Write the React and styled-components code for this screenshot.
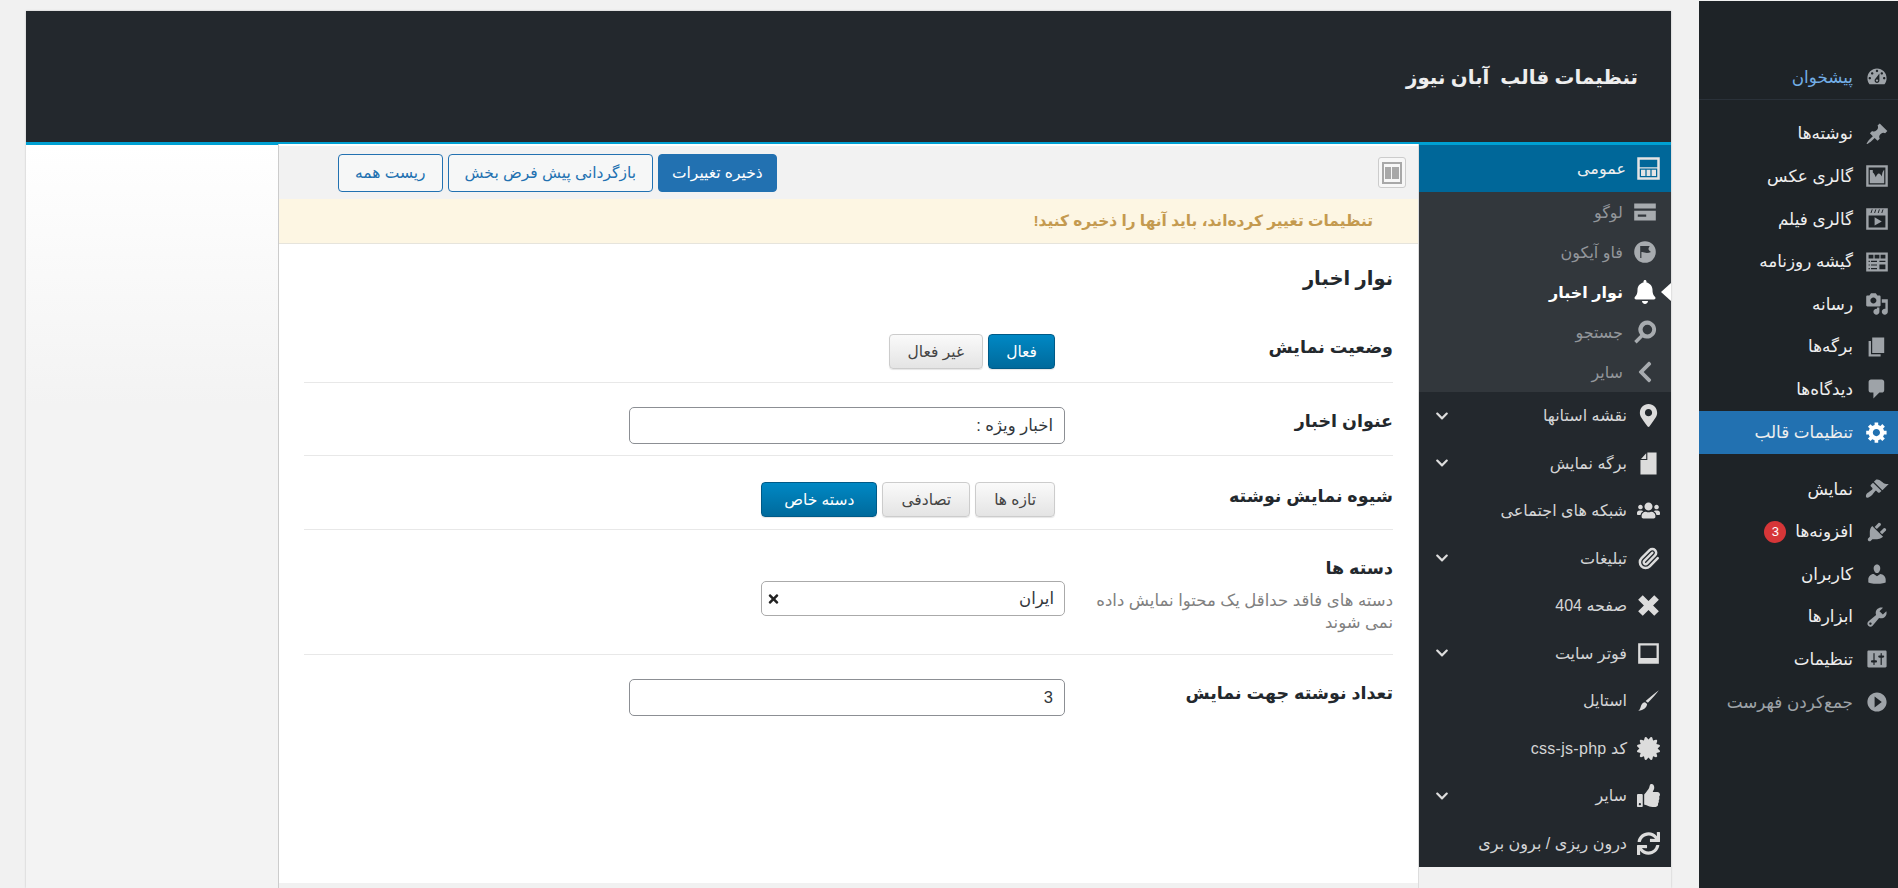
import styled, { createGlobalStyle } from "styled-components";
import { Paperclip } from "lucide-react";
import {
  FaBell,
  FaCertificate,
  FaChevronDown,
  FaChevronLeft,
  FaMapMarkerAlt,
  FaSync,
  FaThumbsUp,
  FaTimes,
  FaUsers,
} from "react-icons/fa";

const FONT = `"Liberation Sans", "DejaVu Sans", sans-serif`;

const GlobalStyle = createGlobalStyle`
  html, body {
    margin: 0;
    height: 100%;
    overflow: hidden;
    background: #f1f1f1;
  }
  * {
    box-sizing: border-box;
  }
`;

const Page = styled.div`
  direction: rtl;
  display: flex;
  gap: 28px;
  height: 888px;
  font-family: ${FONT};
`;

const AdminMenu = styled.nav`
  width: 199px;
  flex: none;
  margin-top: 1px;
  padding-top: 55px;
  background: #1e2327;
  display: flex;
  flex-direction: column;
`;

const AdminItem = styled.div`
  height: ${(p) => (p.$tall ? "43px" : "42.6px")};
  flex: none;
  display: flex;
  align-items: center;
  gap: 12px;
  padding-right: 9px;
  font-size: 16.8px;
  white-space: nowrap;
  color: ${(p) => p.$color || "#eeeeee"};
  background: ${(p) => (p.$active ? "#2271b1" : "transparent")};
  margin-bottom: ${(p) => (p.$gapAfter ? "14px" : "0")};

  svg {
    width: 24px;
    height: 24px;
    flex: none;
    color: ${(p) => (p.$active ? "#ffffff" : "#9ea3a8")};
  }
`;

const AdminDivider = styled.div`
  height: 1px;
  background: #2a3139;
  margin-bottom: 13px;
`;

const Badge = styled.span`
  width: 22px;
  height: 22px;
  border-radius: 50%;
  margin-right: -3px;
  background: #d63638;
  color: #fff;
  font-size: 13px;
  display: flex;
  align-items: center;
  justify-content: center;
`;

const Panel = styled.div`
  width: 1645px;
  flex: none;
  margin-top: 11px;
  display: flex;
  flex-direction: column;
  box-shadow: 0 0 2px rgba(0, 0, 0, 0.2);
`;

const PanelHeader = styled.header`
  height: 134px;
  flex: none;
  background: #23282d;
  border-bottom: 3px solid #00a0d2;
  padding: 51px 33px 0 0;
  color: #eeeeee;
  font-size: 19.8px;
  font-weight: 700;
  line-height: 30px;
  white-space: pre;
`;

const PanelBody = styled.div`
  flex: 1;
  display: flex;
  background: #f1f1f1;
`;

const SettingsNav = styled.div`
  width: 252px;
  flex: none;
  align-self: flex-start;
  background: #23282d;
  display: flex;
  flex-direction: column;
`;

const NavHead = styled.div`
  height: 47px;
  display: flex;
  align-items: center;
  gap: 10px;
  padding-right: 10px;
  background: #006799;
  color: #eeeeee;
  font-size: 16px;
  letter-spacing: 0.3px;

  svg {
    width: 25px;
    height: 25px;
    color: #e4e4e4;
  }
`;

const SubList = styled.div`
  background: #32373c;
  display: flex;
  flex-direction: column;
`;

const SubItem = styled.div`
  position: relative;
  height: 40px;
  display: flex;
  align-items: center;
  gap: 10px;
  padding-right: 14px;
  font-size: 16px;
  letter-spacing: 0.3px;
  font-weight: ${(p) => (p.$active ? 700 : 400)};
  color: ${(p) => (p.$active ? "#ffffff" : "#92969b")};

  svg {
    width: 24px;
    height: 24px;
    flex: none;
    color: ${(p) => (p.$active ? "#ffffff" : "#a7abaf")};
  }

  ${(p) =>
    p.$active &&
    `
    &::after {
      content: "";
      position: absolute;
      right: 0;
      top: 11px;
      border-style: solid;
      border-width: 9px 10px 9px 0;
      border-color: transparent #ffffff transparent transparent;
    }
  `}
`;

const NavItem = styled.div`
  height: 47.5px;
  display: flex;
  align-items: center;
  gap: 10px;
  padding: 0 11px 0 15px;
  color: #d4d5d6;
  font-size: 16px;
  letter-spacing: 0.3px;

  > svg:first-child {
    width: 23px;
    height: 23px;
    flex: none;
    color: #dcdcdc;
  }
`;

const Arrow = styled(FaChevronDown)`
  width: 16px;
  height: 14px;
  margin-right: auto;
  color: #dddddd;
`;

const MainColumn = styled.div`
  width: 1141px;
  flex: none;
  margin-top: -1px;
  border-left: 1px solid #cccccc;
  border-right: 1px solid #dddddd;
`;

const Main = styled.main`
  height: 739px;
  border-top: 2px solid #ffffff;
  background: #ffffff;
`;

const Toolbar = styled.div`
  height: 53px;
  background: #f2f2f2;
  display: flex;
  justify-content: space-between;
  align-items: flex-start;
  padding: 8px 12px 0 59px;
`;

const LayoutToggle = styled.div`
  width: 28px;
  height: 31px;
  margin-top: 3px;
  border: 1px solid #cccccc;
  border-radius: 3px;
  background: #f7f7f7;
  display: flex;
  align-items: center;
  justify-content: center;

  svg {
    width: 20px;
    height: 22px;
  }
`;

const ActionGroup = styled.div`
  display: flex;
  gap: 5px;
`;

const ActionButton = styled.button`
  height: 38px;
  padding: 0 ${(p) => (p.$primary ? 13 : 16)}px;
  border: 1px solid #2271b1;
  border-radius: 4px;
  background: ${(p) => (p.$primary ? "#2271b1" : "#f6f7f7")};
  color: ${(p) => (p.$primary ? "#ffffff" : "#2271b1")};
  font-family: ${FONT};
  font-size: 15.5px;
  white-space: nowrap;
`;

const Notice = styled.div`
  height: 45px;
  padding: 0 45px 0 0;
  display: flex;
  align-items: center;
  background: #fdf6e3;
  border-bottom: 1px solid #e6e4dc;
  color: #c49a4f;
  font-size: 15.4px;
  font-weight: 700;
`;

const Section = styled.section`
  padding: 0 25px;
`;

const SectionTitle = styled.h2`
  margin: 0;
  height: 65px;
  padding-top: 22px;
  font-size: 19.5px;
  line-height: 24px;
  font-weight: 700;
  color: #23282d;
`;

const Row = styled.div`
  display: flex;
  align-items: flex-start;
  padding: 26px 0 ${(p) => p.$bottom || 12}px;
  border-bottom: ${(p) => (p.$last ? "none" : "1px solid #e8e8e8")};
`;

const LabelCol = styled.div`
  width: 328px;
  flex: none;
  padding-left: 22px;
  margin-top: ${(p) => p.$top || 0}px;
`;

const Label = styled.div`
  font-size: 17.5px;
  font-weight: 700;
  line-height: 24px;
  color: #23282d;
`;

const Hint = styled.div`
  margin-top: 9px;
  font-size: 16.5px;
  line-height: 22px;
  color: #808080;
`;

const Control = styled.div`
  margin-top: ${(p) => p.$top || 0}px;
`;

const TextInput = styled.div`
  width: 436px;
  height: 37px;
  padding: 0 11px;
  display: flex;
  align-items: center;
  border: 1px solid #8c8f94;
  border-radius: 5px;
  background: #fff;
  color: #32373c;
  font-size: 16.5px;
`;

const SelectBox = styled(TextInput)`
  width: 304px;
  height: 35px;
  border-color: #aaaaaa;
  justify-content: space-between;
  padding: 0 10px 0 5px;

  svg {
    width: 13px;
    height: 14px;
    color: #222222;
  }
`;

const ToggleGroup = styled.div`
  display: flex;
  gap: 5px;
  padding-right: 10px;
`;

const ToggleButton = styled.div`
  height: 35px;
  padding: 0 ${(p) => p.$pad || 18}px;
  display: flex;
  align-items: center;
  border: 1px solid ${(p) => (p.$on ? "#005a87" : "#cccccc")};
  border-radius: 4px;
  background: ${(p) =>
    p.$on
      ? "linear-gradient(#0088c4, #006a9c)"
      : "linear-gradient(#fafafa, #e4e4e4)"};
  box-shadow: 0 1px 1px rgba(0, 0, 0, 0.1);
  color: ${(p) => (p.$on ? "#ffffff" : "#444444")};
  font-size: 15.5px;
  white-space: nowrap;
`;

const Aside = styled.aside`
  flex: 1;
  background: linear-gradient(#ffffff, #f3f3f3 35%);
`;

const Dash = ({ d }) => (
  <svg viewBox="0 0 20 20" fill="currentColor">
    <path d={d} fillRule="evenodd" />
  </svg>
);

const FilmIcon = () => (
  <svg viewBox="0 0 20 20" fill="currentColor">
    <path d="M1 1h18v18H1zM3 7v10h14V7zM8 8.500l6 3.500-6 3.500z" fillRule="evenodd" />
    <path d="M5 5l1-3M8 5l1-3M11 5l1-3M14 5l1-3" stroke="#1e2327" strokeWidth=".8" />
  </svg>
);

const NewsIcon = () => (
  <svg viewBox="0 0 20 20" fill="currentColor">
    <path
      d="M1 2h18v16H1zM3 4v3h4V4zM8 4v3h4V4zM13 4v3h4V4zM3 9v1h1V9zM5 9v1h5V9zM3 12v1h1v-1zM5 12v1h5v-1zM3 15v1h1v-1zM5 15v1h5v-1zM12 9v1h5V9zM12 12v4h5v-4z"
      fillRule="evenodd"
    />
  </svg>
);

const adminItems = [
  { text: "نوشته‌ها", d: "M10.440 3.020l1.820-1.820 6.360 6.350-1.830 1.820c-1.050-.68-2.480-.57-3.410.36l-.75.75c-.92.93-1.040 2.350-.35 3.410l-1.830 1.820-2.410-2.410-2.800 2.790c-.42.42-3.380 2.710-3.800 2.290s1.860-3.390 2.280-3.810l2.790-2.790L4.100 9.360l1.830-1.820c1.050.69 2.480.57 3.400-.36l.75-.75c.93-.92 1.050-2.350.36-3.410z" },
  { text: "گالری عکس", d: "M1 1h18v18H1zM3 3v14h14V3zM4 5h2.500v2c1 .5 2 2.500 2.500 4 .6-1.500 1.500-3 2.500-3 1 0 2 1.500 2.500 2.500.2-2 .8-5 2-5.500V16H4z" },
  { text: "گالری فیلم", icon: <FilmIcon /> },
  { text: "گیشه روزنامه", icon: <NewsIcon /> },
  { text: "رسانه", d: "M13 11V4c0-.55-.45-1-1-1h-1.670L9 1H5L3.670 3H2c-.55 0-1 .45-1 1v7c0 .55.45 1 1 1h10c.55 0 1-.45 1-1zM7 4.500c1.380 0 2.500 1.120 2.500 2.500S8.380 9.500 7 9.500 4.500 8.380 4.500 7 5.620 4.500 7 4.500zM14 6h5v10.500c0 1.380-1.120 2.500-2.500 2.500S14 17.880 14 16.500s1.120-2.500 2.500-2.500c.17 0 .34.02.5.05V9h-3V6zm-4 8.050V13h2v3.500c0 1.380-1.120 2.500-2.500 2.500S7 17.880 7 16.500 8.120 14 9.500 14c.17 0 .34.02.5.05z" },
  { text: "برگه‌ها", d: "M6 15V2h10v13H6zm-1 1h8v2H3V5h2v11z" },
  { text: "دیدگاه‌ها", d: "M5 2h9c1.100 0 2 .9 2 2v7c0 1.100-.9 2-2 2h-2l-5 5v-5H5c-1.100 0-2-.9-2-2V4c0-1.100.9-2 2-2z" },
];

const adminTools = [
  { text: "نمایش", d: "M14.480 11.060L7.410 3.990l1.500-1.500c.5-.56 2.300-.47 3.510.32 1.210.8 1.430 1.280 2.910 2.100 1.180.64 2.450 1.260 4.450.85zm-.71.71L6.700 4.700 4.930 6.470c-.39.39-.39 1.020 0 1.410l1.060 1.060c.39.39.39 1.030 0 1.420-.6.6-1.430 1.110-2.210 1.690-.35.26-.7.53-1.010.84C1.430 13.230.18 15.520 1.090 16.900c.83 1.270 3.370-.5 4.760-1.890.31-.31.58-.66.84-1.010.58-.78 1.090-1.610 1.690-2.210.39-.39 1.020-.39 1.410 0l1.060 1.060c.39.39 1.020.39 1.410 0z" },
  { text: "افزونه‌ها", badge: 3, d: "M13.110 4.360L9.870 7.600 8 5.730l3.240-3.240c.35-.34 1.050-.2 1.560.32.52.51.66 1.210.31 1.550zm-8 1.770l.91-1.120 9.010 9.010-1.190.84c-.71.71-2.630 1.160-3.820 1.160H6.140L4.900 17.260c-.59.59-1.540.59-2.120 0-.59-.58-.59-1.530 0-2.120l1.240-1.240v-3.880c0-1.130.4-3.190 1.090-3.890zm7.260 3.970l3.240-3.240c.34-.35 1.040-.21 1.550.31.52.51.66 1.210.31 1.550l-3.240 3.250z" },
  { text: "کاربران", d: "M10 9.250c-2.270 0-2.730-3.440-2.730-3.440C7 4.020 7.820 2 9.970 2c2.160 0 2.980 2.020 2.710 3.810 0 0-.41 3.440-2.680 3.440zm0 2.570L12.720 10c2.390 0 4.520 2.330 4.520 4.530v2.490s-3.650 1.130-7.240 1.130c-3.650 0-7.240-1.130-7.240-1.130v-2.490c0-2.250 1.940-4.480 4.470-4.480z" },
  { text: "ابزارها", d: "M16.680 9.770c-1.340 1.340-3.300 1.670-4.950.99l-5.410 6.520c-.99.99-2.590.99-3.580 0s-.99-2.590 0-3.570l6.520-5.420c-.68-1.650-.35-3.610.99-4.950 1.280-1.280 3.120-1.620 4.720-1.060l-2.890 2.890 2.820 2.820 2.860-2.870c.53 1.580.18 3.390-1.080 4.650zM3.810 16.210c.4.39 1.040.39 1.430 0 .4-.4.4-1.040 0-1.430-.39-.4-1.030-.4-1.430 0-.39.39-.39 1.030 0 1.430z" },
  { text: "تنظیمات", d: "M18 16V4c0-.55-.45-1-1-1H3c-.55 0-1 .45-1 1v12c0 .55.45 1 1 1h14c.55 0 1-.45 1-1zM8 11h1c.55 0 1 .45 1 1s-.45 1-1 1H8v1.500c0 .28-.22.5-.5.5s-.5-.22-.5-.5V13H6c-.55 0-1-.45-1-1s.45-1 1-1h1V5.500c0-.28.22-.5.5-.5s.5.22.5.5V11zm5-2h-1c-.55 0-1-.45-1-1s.45-1 1-1h1V5.500c0-.28.22-.5.5-.5s.5.22.5.5V7h1c.55 0 1 .45 1 1s-.45 1-1 1h-1v5.500c0 .28-.22.5-.5.5s-.5-.22-.5-.5V9z" },
];

const GEAR = "M18 12h-2.180c-.17.7-.44 1.350-.81 1.930l1.540 1.540-2.100 2.100-1.540-1.540c-.58.36-1.230.63-1.910.79V19H8v-2.180c-.68-.16-1.330-.43-1.910-.79l-1.540 1.540-2.120-2.120 1.540-1.540c-.36-.58-.63-1.230-.79-1.910H1V9.030h2.170c.16-.7.44-1.350.8-1.940L2.430 5.550l2.100-2.100 1.540 1.540c.58-.37 1.240-.64 1.930-.81V2h3v2.180c.68.16 1.330.43 1.910.79l1.540-1.540 2.120 2.120-1.540 1.540c.36.59.64 1.240.8 1.940H18V12zm-8.500 1.500c1.660 0 3-1.340 3-3s-1.340-3-3-3-3 1.340-3 3 1.340 3 3 3z";
const GAUGE = "M3.760 16h12.480c1.100-1.370 1.760-3.110 1.760-5 0-4.420-3.580-8-8-8s-8 3.580-8 8c0 1.890.66 3.630 1.760 5zM10 4c.55 0 1 .45 1 1s-.45 1-1 1-1-.45-1-1 .45-1 1-1zM6 6c.55 0 1 .45 1 1s-.45 1-1 1-1-.45-1-1 .45-1 1-1zm8 0c.55 0 1 .45 1 1s-.45 1-1 1-1-.45-1-1 .45-1 1-1zm-5.370 5.550L12 7v6c0 1.100-.9 2-2 2s-2-.9-2-2c0-.57.24-1.080.63-1.450zM4 10c.55 0 1 .45 1 1s-.45 1-1 1-1-.45-1-1 .45-1 1-1zm12 0c.55 0 1 .45 1 1s-.45 1-1 1-1-.45-1-1 .45-1 1-1zm-5 3c0-.55-.45-1-1-1s-1 .45-1 1 .45 1 1 1 1-.45 1-1z";
const COLLAPSE = "M18 10c0-4.420-3.580-8-8-8s-8 3.580-8 8 3.580 8 8 8 8-3.580 8-8zM8 5.500v9l6-4.500z";

const subItems = [
  { text: "لوگو", d: "M1 3h18v4H1zM1 9h18v8H1zM4 12v2h7v-2z" },
  { text: "فاو آیکون", d: "M10 1a9 9 0 1 0 0 18 9 9 0 0 0 0-18zM6 5h8c0 0-1.500 2-1 3s2 2 2 2c-2 1-4 1-5.500.5S7 10 7 10v5H6z" },
  { text: "نوار اخبار", active: true, fa: <FaBell /> },
  { text: "جستجو", d: "M12 .5a7.500 7.500 0 0 0-6 12L1 17.500 3 19.500 8 14.500A7.500 7.500 0 1 0 12 .5zM12 4a4 4 0 1 1 0 8 4 4 0 0 1 0-8z" },
  { text: "سایر", fa: <FaChevronLeft /> },
];

const navItems = [
  { text: "نقشه استانها", icon: <FaMapMarkerAlt />, arrow: true },
  { text: "برگه نمایش", icon: <Dash d="M9 .5h8v19H3V7h6zM8 1L3.500 6H8z" />, arrow: true },
  { text: "شبکه های اجتماعی", icon: <FaUsers /> },
  { text: "تبلیغات", icon: <Paperclip strokeWidth={2.6} />, arrow: true },
  { text: "صفحه 404", icon: <Dash d="M5 1l5 5 5-5 4 4-5 5 5 5-4 4-5-5-5 5-4-4 5-5-5-5z" /> },
  { text: "فوتر سایت", icon: <Dash d="M1 1h18v18H1zM3 3v11h14V3z" />, arrow: true },
  { text: "استایل", icon: <Dash d="M19 1c-2 3-6 7-9.500 11l-2-1.500C11 7 16 3.500 19 1zM7 11.500l1.800 1.500C8.500 16 6 18.500 1 19c2-1.500 2-3 2.500-4.500.5-1.500 2-3 3.500-3z" /> },
  { text: "کد css-js-php", icon: <FaCertificate /> },
  { text: "سایر", icon: <FaThumbsUp />, arrow: true },
  { text: "درون ریزی / برون بری", icon: <FaSync /> },
];

export default function App() {
  return (
    <Page>
      <GlobalStyle />
      <AdminMenu>
        <AdminItem $color="#72aee6">
          <Dash d={GAUGE} />
          پیشخوان
        </AdminItem>
        <AdminDivider />
        {adminItems.map((item) => (
          <AdminItem key={item.text}>
            {item.icon || <Dash d={item.d} />}
            {item.text}
          </AdminItem>
        ))}
        <AdminItem $active $tall $gapAfter>
          <Dash d={GEAR} />
          تنظیمات قالب
        </AdminItem>
        {adminTools.map((item) => (
          <AdminItem key={item.text}>
            <Dash d={item.d} />
            {item.text}
            {item.badge && <Badge>{item.badge}</Badge>}
          </AdminItem>
        ))}
        <AdminItem $color="#9ea3a8">
          <Dash d={COLLAPSE} />
          جمع‌کردن فهرست
        </AdminItem>
      </AdminMenu>

      <Panel>
        <PanelHeader>{"تنظیمات قالب  آبان نیوز"}</PanelHeader>
        <PanelBody>
          <SettingsNav>
            <NavHead>
              <Dash d="M1 1h18v18H1zM3 3v14h14V3zM3 9h14v1H3zM4 11h3.500v5H4zM8.500 11h3v5h-3zM12.500 11H16v5h-3.500z" />
              عمومی
            </NavHead>
            <SubList>
              {subItems.map((item) => (
                <SubItem key={item.text} $active={item.active}>
                  {item.fa || <Dash d={item.d} />}
                  {item.text}
                </SubItem>
              ))}
            </SubList>
            {navItems.map((item) => (
              <NavItem key={item.text}>
                {item.icon}
                {item.text}
                {item.arrow && <Arrow />}
              </NavItem>
            ))}
          </SettingsNav>

          <MainColumn>
            <Main>
              <Toolbar>
                <LayoutToggle>
                  <svg viewBox="0 0 20 22">
                    <path
                      d="M0 0h20v22H0zM2 2v18h16V2zM3 5h6v12H3zM10 5h7v12h-7z"
                      fill="#a8a8a8"
                      fillRule="evenodd"
                    />
                  </svg>
                </LayoutToggle>
                <ActionGroup>
                  <ActionButton $primary>ذخیره تغییرات</ActionButton>
                  <ActionButton>بازگردانی پیش فرض بخش</ActionButton>
                  <ActionButton>ریست همه</ActionButton>
                </ActionGroup>
              </Toolbar>
              <Notice>تنظیمات تغییر کرده‌اند، باید آنها را ذخیره کنید!</Notice>
              <Section>
                <SectionTitle>نوار اخبار</SectionTitle>
                <Row $bottom={13}>
                  <LabelCol>
                    <Label>وضعیت نمایش</Label>
                  </LabelCol>
                  <Control $top={-1}>
                    <ToggleGroup>
                      <ToggleButton $on $pad={17}>فعال</ToggleButton>
                      <ToggleButton>غیر فعال</ToggleButton>
                    </ToggleGroup>
                  </Control>
                </Row>
                <Row $bottom={11}>
                  <LabelCol>
                    <Label>عنوان اخبار</Label>
                  </LabelCol>
                  <Control $top={-2}>
                    <TextInput>اخبار ویژه :</TextInput>
                  </Control>
                </Row>
                <Row $bottom={12}>
                  <LabelCol $top={2}>
                    <Label>شیوه نمایش نوشته</Label>
                  </LabelCol>
                  <Control>
                    <ToggleGroup>
                      <ToggleButton>تازه ها</ToggleButton>
                      <ToggleButton>تصادفی</ToggleButton>
                      <ToggleButton $on $pad={22}>دسته خاص</ToggleButton>
                    </ToggleGroup>
                  </Control>
                </Row>
                <Row $bottom={21}>
                  <LabelCol>
                    <Label>دسته ها</Label>
                    <Hint>دسته های فاقد حداقل یک محتوا نمایش داده نمی شوند</Hint>
                  </LabelCol>
                  <Control $top={25}>
                    <SelectBox>
                      ایران
                      <FaTimes />
                    </SelectBox>
                  </Control>
                </Row>
                <Row $last>
                  <LabelCol>
                    <Label>تعداد نوشته جهت نمایش</Label>
                  </LabelCol>
                  <Control $top={-2}>
                    <TextInput>3</TextInput>
                  </Control>
                </Row>
              </Section>
            </Main>
          </MainColumn>

          <Aside />
        </PanelBody>
      </Panel>
    </Page>
  );
}
